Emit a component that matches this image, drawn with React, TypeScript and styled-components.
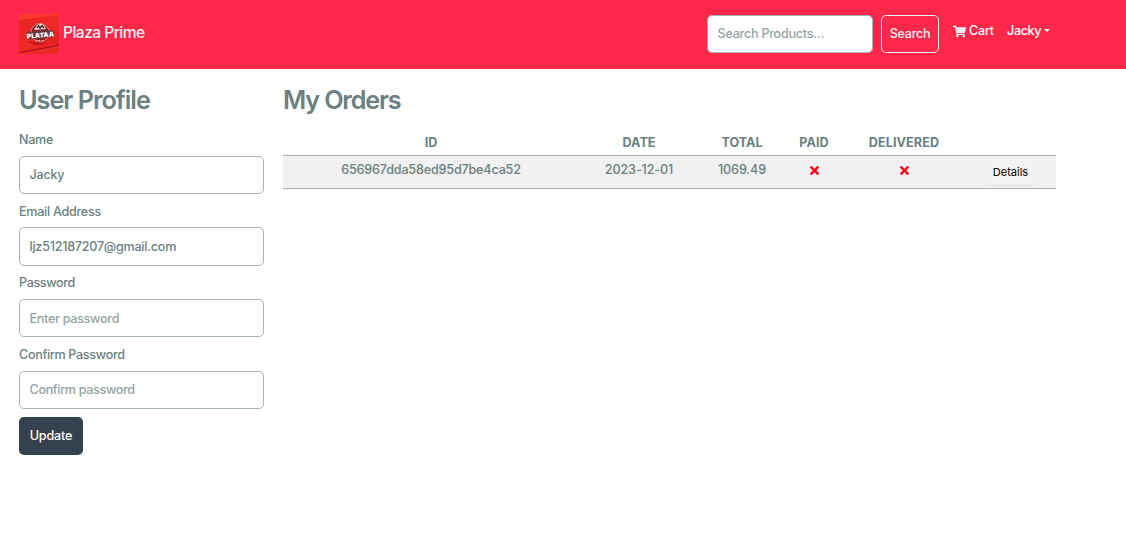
import React from "react";
import styled, { createGlobalStyle } from "styled-components";
import { FaShoppingCart, FaTimes } from "react-icons/fa";

const GlobalStyle = createGlobalStyle`
  *, *::before, *::after { box-sizing: border-box; }
  body {
    margin: 0;
    background: #fff;
    color: #6c8080;
    font: 500 12.6px/20px Inter, "Liberation Sans", sans-serif;
    -webkit-font-smoothing: antialiased;
  }
  button, input { font: inherit; letter-spacing: inherit; }
`;

const Text = styled.span<{ $track?: number }>`
  letter-spacing: ${(p) => p.$track ?? 0}px;
`;

const Navbar = styled.header`
  display: flex;
  align-items: flex-start;
  height: 69px;
  padding: 14px 76px 0 19px;
  background: #ff284b;
  color: #ecf0f1;
`;

const Brand = styled.a`
  display: flex;
  gap: 4px;
  margin-right: auto;
  font-size: 15.6px;
  line-height: 37px;
`;

const SearchForm = styled.form`
  display: flex;
  gap: 8px;
  margin: 1px 14px 0 0;
`;

const Input = styled.input<{ $width: string; $track?: number; $lift?: boolean }>`
  display: block;
  width: ${(p) => p.$width};
  height: 38.3px;
  padding: 0 9.5px ${(p) => (p.$lift ? 2 : 0)}px;
  border: 1px solid #a3b5b6;
  border-radius: 5px;
  outline: none;
  background: #fff;
  color: #6c8080;
  letter-spacing: ${(p) => p.$track ?? 0}px;
  &::placeholder { color: #95a3a4; opacity: 1; }
`;

const SearchButton = styled.button`
  width: 58px;
  height: 38px;
  padding: 0 0 1px;
  border: 1px solid #ecf0f1;
  border-radius: 5px;
  background: transparent;
  color: #ecf0f1;
`;

const NavLink = styled.a<{ $width: number }>`
  display: flex;
  align-items: center;
  gap: 3px;
  width: ${(p) => p.$width}px;
  height: 34px;
  color: #fff;
  white-space: nowrap;
  svg { color: #ecf0f1; margin-top: 1px; flex: none; }
`;

const Caret = styled.i`
  border: 3px solid transparent;
  border-top-color: #fff;
  border-bottom: 0;
  transform: translateY(-1px);
`;

const Main = styled.main`
  display: grid;
  grid-template-columns: 245px 773px;
  column-gap: 19px;
  padding: 15px 0 0 19px;
`;

const Title = styled.h2<{ $track: number }>`
  margin: 0;
  font-size: 25.2px;
  line-height: 32px;
  font-weight: 600;
  letter-spacing: ${(p) => p.$track}px;
`;

const ProfileForm = styled.form`
  padding-top: 14px;
`;

const Field = styled.label`
  display: block;
  height: 71.7px;
  ${Text} { display: block; height: 25.7px; }
`;

const UpdateButton = styled.button`
  display: block;
  width: 64px;
  height: 38px;
  margin-top: 0.6px;
  padding: 0 0 1px;
  border: 0;
  border-radius: 5px;
  background: #34424f;
  color: #fff;
`;

const Table = styled.table`
  width: 773px;
  margin-top: 13px;
  table-layout: fixed;
  border-collapse: collapse;
  text-align: center;
`;

const HeadCell = styled.th`
  height: 26px;
  padding: 4px 0 1px;
  border-bottom: 1px solid #a3b5b6;
  font-weight: 700;
`;

const Cell = styled.td`
  height: 33px;
  padding: 4px 0 0;
  border-bottom: 1px solid #a3b5b6;
  background: #f1f1f1;
  vertical-align: top;
  svg { display: block; margin: 4px auto 0; color: #ff0019; }
`;

const DetailsButton = styled.button`
  display: block;
  width: 50px;
  height: 25px;
  margin: 0 auto;
  padding: 0;
  border: 0;
  border-radius: 4px;
  background: #f2f2f2;
  box-shadow: 0 1px 1px rgba(0, 0, 0, 0.06);
  color: #000;
  font-size: 11px;
  font-weight: 400;
`;

const LogoImage = styled.svg`
  display: block;
  flex: none;
  overflow: visible;
  line-height: 1;
`;

const Logo = () => (
  <LogoImage width="40" height="40" viewBox="0 0 40 40">
    <defs>
      <linearGradient id="box" x1="0" y1="0" x2="1" y2="1">
        <stop offset="0" stopColor="#e5201f" />
        <stop offset="0.5" stopColor="#f02a27" />
        <stop offset="1" stopColor="#e01d20" />
      </linearGradient>
    </defs>
    <rect width="40" height="40" fill="#fb3a2e" />
    <path d="M0 6 40 1V32L0 39Z" fill="url(#box)" />
    <path d="M0 38 40 31V32L0 39.500Z" fill="#a8131c" />
    <path d="M0 40 40 32V40Z" fill="#ed2925" />
    <path d="M9 27 25 29 34 22 24 31 15 31Z" fill="#a81019" opacity="0.6" />
    <circle cx="21" cy="18.500" r="9" fill="#8a1d24" stroke="#d9a49f" strokeWidth="0.700" />
    <path d="M15 16 18 11 22 9.500 25 11 27 15Z" fill="#f1dfda" />
    <path d="M18 14 19.500 11.500 21 14 23 11.500 25 14" fill="none" stroke="#4b1a20" strokeWidth="1.300" />
    <path d="M8 18 34 16V23L9 25.500Z" fill="#6a3a3c" />
    <text x="21.300" y="23.600" textAnchor="middle" transform="rotate(-5 21 20)" fontSize="6.600" fontWeight="900" fill="#fff">PLATAA</text>
    <path d="M17 26.500H25" stroke="#efb5ae" strokeWidth="1" strokeDasharray="1.500 1" />
  </LogoImage>
);

const fields = [
  { label: "Name", track: -0.3, value: "Jacky", inputTrack: -0.25 },
  { label: "Email Address", track: -0.28, value: "ljz512187207@gmail.com", inputTrack: -0.25 },
  { label: "Password", track: -0.38, placeholder: "Enter password", inputTrack: -0.3, type: "password" },
  { label: "Confirm Password", track: -0.33, placeholder: "Confirm password", inputTrack: -0.35, type: "password" },
];

const columns = [
  { name: "ID", width: 296, track: 0 },
  { name: "DATE", width: 120, track: 0 },
  { name: "TOTAL", width: 86, track: 0 },
  { name: "PAID", width: 58, track: 0.1 },
  { name: "DELIVERED", width: 122, track: 0.1 },
  { name: "", width: 91, track: 0 },
];

export default function App() {
  return (
    <>
      <GlobalStyle />
      <Navbar>
        <Brand><Logo /><Text $track={-0.55}>Plaza Prime</Text></Brand>
        <SearchForm>
          <Input $width="166px" placeholder="Search Products..." $track={-0.25} $lift />
          <SearchButton type="button"><Text $track={-0.3}>Search</Text></SearchButton>
        </SearchForm>
        <NavLink $width={54}><FaShoppingCart size={13} /><Text $track={-0.25}>Cart</Text></NavLink>
        <NavLink $width={43}><Text $track={-0.35}>Jacky</Text><Caret /></NavLink>
      </Navbar>
      <Main>
        <section>
          <Title $track={-0.98}>User Profile</Title>
          <ProfileForm>
            {fields.map((f) => (
              <Field key={f.label}>
                <Text $track={f.track}>{f.label}</Text>
                <Input $width="100%" type={f.type ?? "text"} defaultValue={f.value} placeholder={f.placeholder} $track={f.inputTrack} />
              </Field>
            ))}
            <UpdateButton type="button"><Text $track={-0.15}>Update</Text></UpdateButton>
          </ProfileForm>
        </section>
        <section>
          <Title $track={-1.15}>My Orders</Title>
          <Table>
            <colgroup>{columns.map((c, i) => <col key={i} width={c.width} />)}</colgroup>
            <thead>
              <tr>{columns.map((c, i) => <HeadCell key={i}><Text $track={c.track}>{c.name}</Text></HeadCell>)}</tr>
            </thead>
            <tbody>
              <tr>
                <Cell><Text $track={-0.18}>656967dda58ed95d7be4ca52</Text></Cell>
                <Cell><Text $track={-0.12}>2023-12-01</Text></Cell>
                <Cell><Text $track={-0.12}>1069.49</Text></Cell>
                <Cell><FaTimes size={13} /></Cell>
                <Cell><FaTimes size={13} /></Cell>
                <Cell><DetailsButton type="button"><Text>Details</Text></DetailsButton></Cell>
              </tr>
            </tbody>
          </Table>
        </section>
      </Main>
    </>
  );
}
